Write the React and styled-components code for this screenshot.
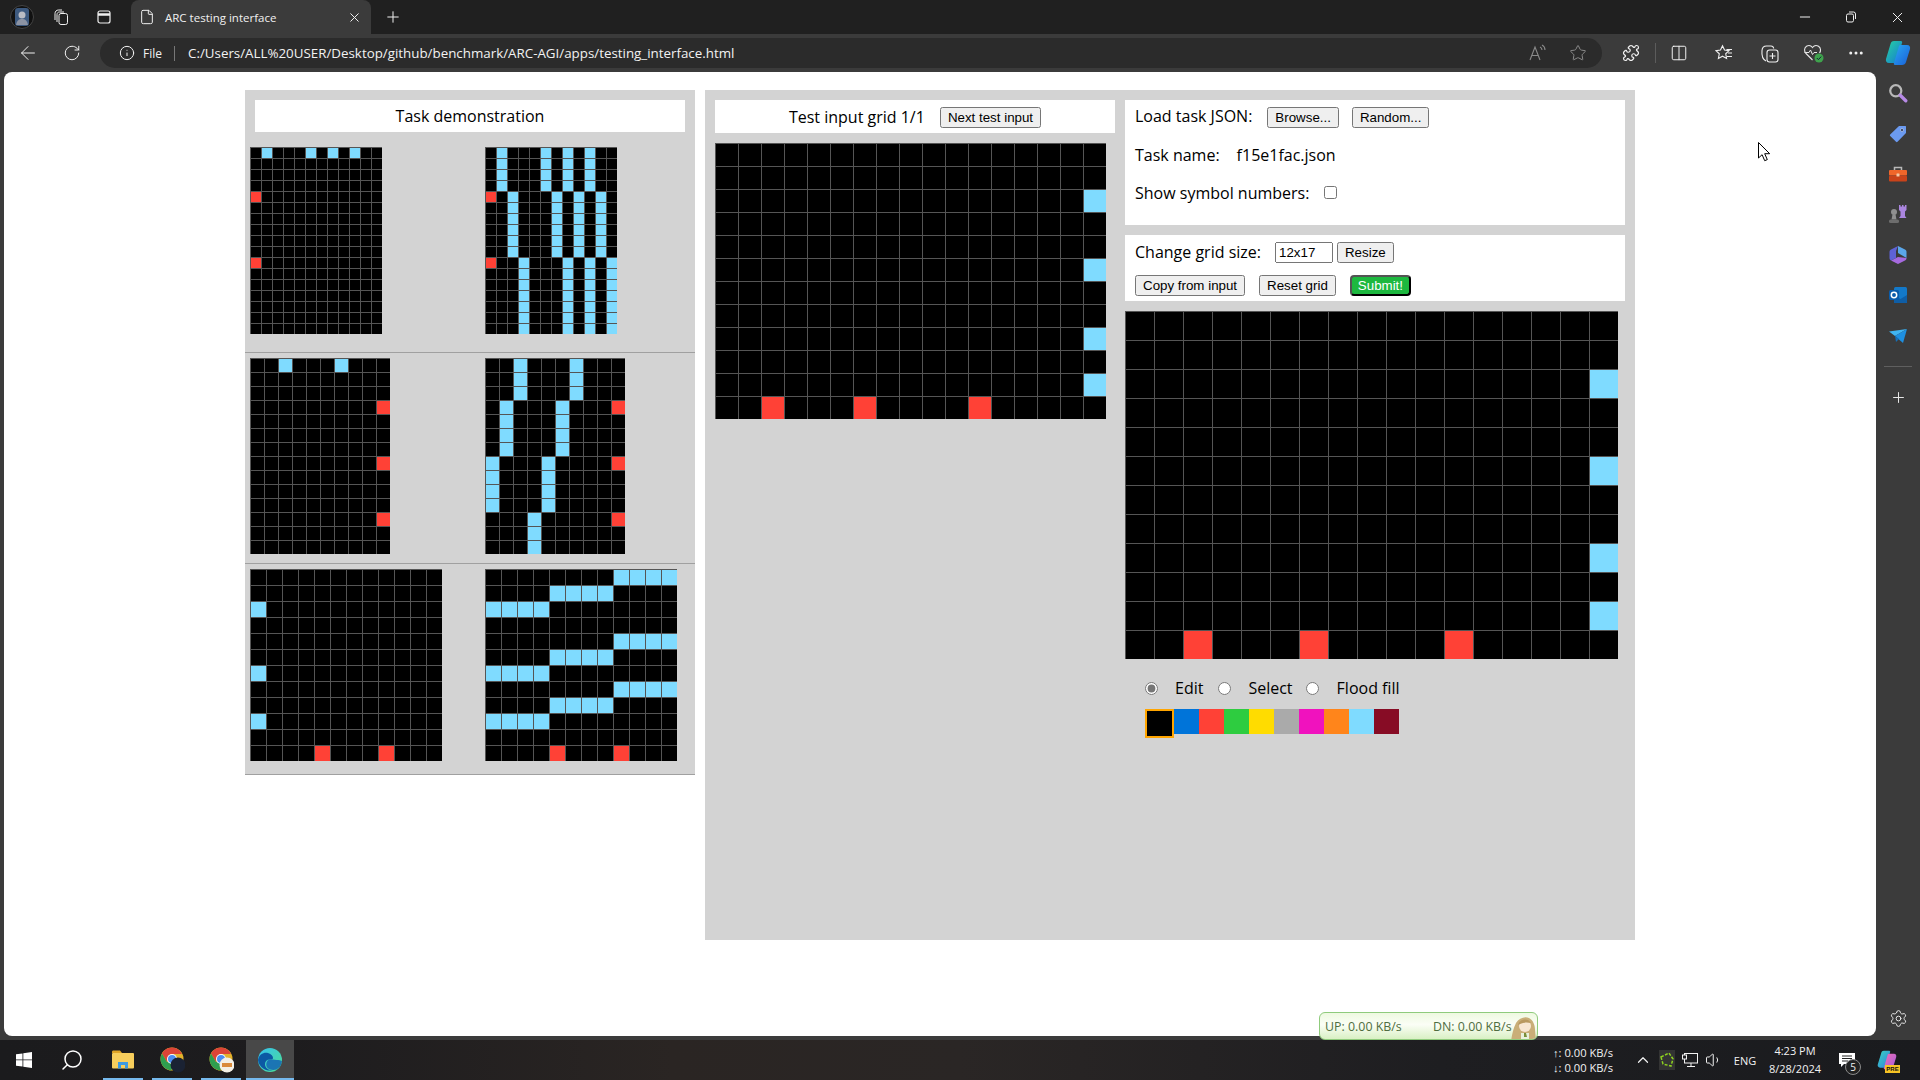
import React from 'react';
import styled, { createGlobalStyle } from 'styled-components';
import {
  ArrowLeft, RotateCw, Info, Star, Puzzle, Columns2, Plus, X, Minus, File, MoreHorizontal,
  Settings, ChevronUp, Volume1, Search,
} from 'lucide-react';

const BLUE = '#7FDBFF';
const RED = '#FF4136';
const PALETTE = ['#000000', '#0074D9', RED, '#2ECC40', '#FFDC00', '#AAAAAA', '#F012BE', '#FF851B', BLUE, '#870C25'];

const GlobalStyle = createGlobalStyle`
  html, body { margin: 0; padding: 0; background: #202020; overflow: hidden; }
  * { box-sizing: border-box; }
`;

const Screen = styled.div`
  position: relative;
  width: 1920px;
  height: 1080px;
  display: flex;
  flex-direction: column;
  overflow: hidden;
  font-family: "Open Sans", sans-serif;
  color: #000;
`;

/* browser chrome */
const TitleBar = styled.div`
  height: 34px;
  background: #202020;
  display: flex;
  align-items: stretch;
  color: #f0f0f0;
`;

const Slot = styled.div`
  width: ${p => p.$w}px;
  flex: none;
  display: flex;
  align-items: center;
  justify-content: center;
  color: ${p => p.$color || 'inherit'};
`;

const Tab = styled.div`
  width: 240px;
  margin-left: 1px;
  background: #3b3b3b;
  border-radius: 8px 8px 0 0;
  display: flex;
  align-items: center;
  padding: 0 9px 0 8px;
  font-size: 11.5px;
  color: #f0f0f0;
`;

const TabTitle = styled.span`
  margin-left: 10px;
  flex: 1;
`;

const PlusSlot = styled(Slot)`
  margin-left: 1px;
`;

const Spacer = styled.div`
  flex: 1;
`;

const Toolbar = styled.div`
  height: 38px;
  background: #3b3b3b;
  display: flex;
  align-items: center;
  color: #f0f0f0;
`;

const AddressPill = styled.div`
  width: 1502px;
  height: 30px;
  margin-left: 12px;
  margin-right: 8px;
  border-radius: 15px;
  background: #2b2b2b;
  display: flex;
  align-items: center;
  padding-left: 19px;
  font-size: 12px;
  color: #f2f2f2;
`;

const FileLabel = styled.span`
  margin-left: 8px;
`;

const PillDivider = styled.div`
  width: 1px;
  height: 15px;
  background: #777;
  margin: 0 13px 0 12px;
`;

const Url = styled.span`
  flex: 1;
  font-size: 13.35px;
  white-space: nowrap;
`;

const ToolGroup = styled.div`
  display: flex;
  align-items: center;
  gap: 3px;
`;

const ToolDivider = styled.div`
  width: 1px;
  height: 20px;
  background: #5c5c5c;
  margin: 0 -1px 0 0;
`;

const Main = styled.div`
  flex: 1;
  display: flex;
  background: #3b3b3b;
  padding-left: 4px;
`;

const Page = styled.div`
  width: 1872px;
  height: 964px;
  background: #fff;
  border-radius: 8px;
  padding: 18px 0 0 241px;
  display: flex;
  align-items: flex-start;
  gap: 10px;
`;

const SideBar = styled.div`
  width: 44px;
  height: 964px;
  display: flex;
  flex-direction: column;
  align-items: center;
  padding-top: 1px;
  color: #e6e6e6;
`;

const SideSlot = styled.div`
  height: 40.4px;
  width: 44px;
  display: flex;
  align-items: center;
  justify-content: center;
`;

const SideRule = styled.div`
  width: 28px;
  height: 1px;
  background: #5f5f5f;
  margin: 10px 0 11px;
`;

const SideBottom = styled.div`
  margin-top: auto;
  height: 36px;
  display: flex;
  align-items: center;
`;

/* the ARC page */
const DemoPanel = styled.div`
  width: 450px;
  height: 685px;
  background: #d3d3d3;
  padding-top: 10px;
`;

const DemoTitle = styled.div`
  height: 32px;
  margin: 0 10px;
  background: #fff;
  font-size: 16px;
  display: flex;
  align-items: center;
  justify-content: center;
`;

const PairList = styled.div`
  margin-top: 10px;
`;

const Pair = styled.div`
  height: 211px;
  border-bottom: 1px solid #a0a0a0;
  padding: 5px 0 0 5px;
  display: grid;
  grid-template-columns: 235px 1fr;
  align-items: start;
`;

const GridBox = styled.div`
  display: grid;
  grid-template-columns: repeat(${p => p.$cols}, ${p => p.$cell}px);
  grid-auto-rows: ${p => p.$cell}px;
  width: max-content;
`;

const Cell = styled.div`
  border-top: 1px solid #555;
  border-left: 1px solid #555;
  background: ${p => p.$fill};
`;

const WorkPanel = styled.div`
  width: 930px;
  height: 850px;
  background: #d3d3d3;
  padding: 10px;
  display: flex;
  gap: 10px;
  align-items: flex-start;
`;

const InputColumn = styled.div`
  width: 400px;
`;

const InputTitle = styled.div`
  height: 33px;
  background: #fff;
  font-size: 16px;
  display: flex;
  align-items: center;
  justify-content: center;
  gap: 15px;
  margin-bottom: 10px;
`;

const OutputColumn = styled.div`
  width: 500px;
`;

const WhiteBox = styled.div`
  background: #fff;
  height: ${p => p.$h}px;
  padding: ${p => p.$pad}px 0 0 10px;
  margin-bottom: 10px;
  font-size: 16px;
`;

const InfoRow = styled.div`
  height: 33px;
  margin-bottom: 5px;
  display: flex;
  align-items: center;
  gap: ${p => p.$gap}px;
`;

const ControlRow = styled.div`
  height: 21px;
  margin-bottom: 12px;
  display: flex;
  align-items: center;
  gap: ${p => p.$gap}px;
`;

const Label = styled.span`
  margin-right: ${p => p.$mr}px;
  margin-bottom: 2px;
`;

const Button = styled.button`
  font-family: "Liberation Sans", Arial, sans-serif;
  font-size: 13.333px;
  height: 21px;
`;

const HeaderButton = styled(Button)`
  margin-top: 2px;
`;

const SubmitButton = styled(Button)`
  background: #1db83f;
  color: #fff;
  border: 2px outset #000;
  border-radius: 4px;
  padding: 1px 6px;
`;

const SizeInput = styled.input`
  width: 58px;
  height: 21px;
  font-family: "Liberation Sans", Arial, sans-serif;
  font-size: 13.333px;
  margin-right: -10px;
`;

const Check = styled.input`
  width: 13px;
  height: 13px;
  margin: 0;
`;

const ModeRow = styled.div`
  margin: 17px 0 9px 20px;
  height: 24px;
  display: flex;
  align-items: center;
  font-size: 16px;
`;

const Mode = styled.label`
  display: flex;
  align-items: center;
  gap: ${p => p.$gap}px;
  margin-right: ${p => p.$mr}px;
`;

const Radio = styled.input`
  width: 13px;
  height: 13px;
  margin: 0;
  accent-color: #767676;
`;

const Swatches = styled.div`
  margin-left: 20px;
  display: flex;
  align-items: flex-start;
`;

const Swatch = styled.div`
  width: ${p => (p.$selected ? 29 : 25)}px;
  height: ${p => (p.$selected ? 29 : 25)}px;
  background: ${p => p.$fill};
  border: ${p => (p.$selected ? '2px solid orange' : 'none')};
`;

/* windows bits */
const Taskbar = styled.div`
  height: 40px;
  background: linear-gradient(90deg, #1b1b1d 0%, #1d1c1e 15%, #2a2523 35%, #2a2625 50%, #1e1e21 75%, #1a1b1e 100%);
  display: flex;
  align-items: stretch;
  color: #fff;
`;

const TaskApps = styled.div`
  display: flex;
  margin-left: 3px;
  gap: 1px;
`;

const TaskItem = styled.div`
  position: relative;
  width: 48px;
  display: flex;
  align-items: center;
  justify-content: center;
  background: ${p => (p.$active ? '#484848' : 'transparent')};
  &::after {
    content: '';
    position: absolute;
    bottom: 0;
    height: 2px;
    left: ${p => (p.$active ? 0 : 4)}px;
    right: ${p => (p.$active ? 0 : 4)}px;
    background: #76b9ed;
  }
`;

const TaskSearch = styled(Search)`
  transform: scaleX(-1);
`;

const Tray = styled.div`
  margin-left: auto;
  margin-right: 14px;
  display: flex;
  align-items: stretch;
  font-size: 11px;
  color: #f2f2f2;
`;

const Speed = styled.div`
  width: 78px;
  display: flex;
  flex-direction: column;
  justify-content: center;
  gap: 1px;
  font-size: 11.2px;
  line-height: 14px;
  white-space: nowrap;
`;

const Clock = styled.div`
  width: 62px;
  display: flex;
  flex-direction: column;
  align-items: center;
  justify-content: center;
  line-height: 18px;
  font-size: 11px;
  white-space: nowrap;
`;

const NetWidget = styled.div`
  position: absolute;
  left: 1319px;
  top: 1012px;
  width: 219px;
  height: 28px;
  border: 1px solid #8fcb7c;
  border-radius: 6px;
  background: linear-gradient(180deg, #eef9e0 0%, #fbfef6 45%, #d9f0c4 100%);
  display: flex;
  align-items: center;
  padding-left: 5px;
  font-size: 12.4px;
  color: #4f6d40;
  overflow: hidden;
`;

const NetValue = styled.span`
  width: ${p => p.$w}px;
  flex: none;
  white-space: nowrap;
`;

const Mascot = styled.svg`
  position: absolute;
  right: 0;
  top: 0;
`;

const Cursor = styled.svg`
  position: absolute;
  left: 1758px;
  top: 142px;
`;

const NotifyBadge = styled.span`
  position: absolute;
  right: -6px;
  bottom: -7px;
  width: 16px;
  height: 16px;
  border-radius: 50%;
  border: 1px solid #8a8a8a;
  background: #222;
  font-size: 10px;
  line-height: 14px;
  text-align: center;
`;

const NotifyWrap = styled.div`
  position: relative;
  display: flex;
`;

const PreWrap = styled.div`
  position: relative;
  display: flex;
`;

const PreBadge = styled.span`
  position: absolute;
  right: -3px;
  bottom: -3px;
  width: 15px;
  height: 8px;
  background: #f7c325;
  color: #111;
  font-family: "Liberation Sans", Arial, sans-serif;
  font-weight: 700;
  font-size: 6px;
  line-height: 8px;
  text-align: center;
`;

function makeGrid(rows, cols, blues, reds) {
  const grid = Array.from({ length: rows }, () => Array(cols).fill('#000000'));
  blues.forEach(([from, to, columns]) => {
    for (let r = from; r <= to; r++) columns.forEach(c => { grid[r][c] = BLUE; });
  });
  reds.forEach(([r, c]) => { grid[r][c] = RED; });
  return grid;
}

const Grid = ({ data, cell }) => (
  <GridBox $cols={data[0].length} $cell={cell}>
    {data.flat().map((fill, i) => <Cell key={i} $fill={fill} />)}
  </GridBox>
);

const PAIRS = [
  {
    cell: 11,
    input: makeGrid(17, 12, [[0, 0, [1, 5, 7, 9]]], [[4, 0], [10, 0]]),
    output: makeGrid(17, 12, [[0, 3, [1, 5, 7, 9]], [4, 9, [2, 6, 8, 10]], [10, 16, [3, 7, 9, 11]]], [[4, 0], [10, 0]]),
  },
  {
    cell: 14,
    input: makeGrid(14, 10, [[0, 0, [2, 6]]], [[3, 9], [7, 9], [11, 9]]),
    output: makeGrid(14, 10, [[0, 2, [2, 6]], [3, 6, [1, 5]], [7, 10, [0, 4]], [11, 13, [3]]], [[3, 9], [7, 9], [11, 9]]),
  },
  {
    cell: 16,
    input: makeGrid(12, 12, [[2, 2, [0]], [6, 6, [0]], [9, 9, [0]]], [[11, 4], [11, 8]]),
    output: makeGrid(12, 12, [
      [0, 0, [8, 9, 10, 11]], [1, 1, [4, 5, 6, 7]], [2, 2, [0, 1, 2, 3]],
      [4, 4, [8, 9, 10, 11]], [5, 5, [4, 5, 6, 7]], [6, 6, [0, 1, 2, 3]],
      [7, 7, [8, 9, 10, 11]], [8, 8, [4, 5, 6, 7]], [9, 9, [0, 1, 2, 3]],
    ], [[11, 4], [11, 8]]),
  },
];

const TEST_GRID = makeGrid(12, 17, [[2, 2, [16]], [5, 5, [16]], [8, 8, [16]], [10, 10, [16]]], [[11, 2], [11, 6], [11, 11]]);

const Avatar = () => (
  <svg width="24" height="24" viewBox="0 0 24 24">
    <circle cx="12" cy="12" r="11.5" fill="#111" stroke="#444" />
    <rect x="5" y="3" width="14" height="18" rx="3" fill="#3d5a80" />
    <circle cx="12" cy="10" r="3.5" fill="#b9bcc4" />
    <path d="M6 20c1-5 3-6 6-6s5 1 6 6z" fill="#8c93a3" />
  </svg>
);

const Workspaces = () => (
  <svg width="18" height="18" viewBox="0 0 18 18" fill="none" stroke="currentColor" strokeWidth="1">
    <rect x="7" y="5.5" width="8.5" height="11" rx="2" />
    <path d="M5 14V6.5c0-1.5 1-2.5 2.5-2.5H12M3 12V5.500C3 3.500 4.500 2 6.500 2H10" />
  </svg>
);

const TabStrip = () => (
  <svg width="16" height="16" viewBox="0 0 16 16" fill="none" stroke="currentColor" strokeWidth="1.2">
    <rect x="2" y="2" width="12" height="12" rx="2" />
    <path d="M2 5.500h12" strokeWidth="2.500" />
  </svg>
);

const Restore = () => (
  <svg width="12" height="12" viewBox="0 0 12 12" fill="none" stroke="currentColor" strokeWidth="1">
    <rect x="1.500" y="3" width="7" height="8" rx="1.500" />
    <path d="M4 1h4.500A2 2 0 0 1 10.500 3v5" />
  </svg>
);

const ReadAloud = () => (
  <svg width="20" height="18" viewBox="0 0 20 18" fill="none" stroke="#8a8a8a" strokeWidth="1.100">
    <path d="M2 16L7 3l5 13M4 11.500h6" />
    <path d="M12 3c1.500.7 2 1.700 2 3M14 1c2.200 1 3 2.800 3 5" />
  </svg>
);

const FavoritesList = () => (
  <svg width="18" height="18" viewBox="0 0 18 18" fill="none" stroke="currentColor" strokeWidth="1.100">
    <path d="M7.500 1.800l2 4.300 4.500.5-3.300 3.200.9 4.700-4.100-2.300-4.100 2.300.9-4.700L1 6.600l4.500-.5z" />
    <path d="M11.500 5.500H17M13 9h4M12 12.500h5" />
  </svg>
);

const Collections = () => (
  <svg width="19" height="19" viewBox="0 0 19 19" fill="none" stroke="currentColor" strokeWidth="1.100">
    <path d="M6 17C3 15.500 1.500 12 2 6.500 2.200 3.500 4 2 6.500 2H11c1.500 0 2.500 1 2.700 2.500" />
    <rect x="7" y="6" width="11" height="12" rx="2.500" />
    <path d="M12.500 9v6M9.500 12h6" />
  </svg>
);

const HeartCheck = () => (
  <svg width="22" height="22" viewBox="0 0 22 22" fill="none">
    <path d="M9.500 18L3 11.500C1 9.500 1 6 3.500 4.300 5.700 3 8 3.600 9.500 5.500 11 3.600 13.500 3 15.500 4.300 18 6 18 9 16.500 11" stroke="#e6e6e6" strokeWidth="1.100" />
    <path d="M1.500 10.500h4.500l1.500-2.500 2 4.500 1.500-2h3" stroke="#e6e6e6" strokeWidth="1" />
    <circle cx="16" cy="16" r="4.500" fill="#3fa34d" />
    <path d="M13.800 16l1.600 1.600 2.800-3" stroke="#123" strokeWidth="1" />
  </svg>
);

const CopilotLogo = () => (
  <svg width="26" height="26" viewBox="0 0 26 26">
    <defs>
      <linearGradient id="copA" x1="0" y1="0" x2="1" y2="1">
        <stop offset="0" stopColor="#27d3a0" />
        <stop offset="1" stopColor="#1478d4" />
      </linearGradient>
      <linearGradient id="copB" x1="0" y1="0" x2="1" y2="1">
        <stop offset="0" stopColor="#2aa8f2" />
        <stop offset="1" stopColor="#1a5fd8" />
      </linearGradient>
    </defs>
    <path d="M9 1h7c1 0 1.500 1 1 2L12 21c-.5 1.500-1.500 2-3 2H4c-2.500 0-3.500-2-3-4L5.500 4C6 2 7 1 9 1z" fill="url(#copA)" />
    <path d="M16 5h6c2.500 0 3.500 2 3 4l-4 13c-.5 2-2 3-4 3h-7c-1 0-1.500-1-1-2l5-17c.3-.7 1-1 2-1z" fill="url(#copB)" />
  </svg>
);

const CopilotPre = () => (
  <PreWrap>
    <svg width="20" height="20" viewBox="0 0 26 26">
      <defs>
        <linearGradient id="preA" x1="0" y1="0" x2="1" y2="1">
          <stop offset="0" stopColor="#3ad6c0" />
          <stop offset="1" stopColor="#2f7fe0" />
        </linearGradient>
        <linearGradient id="preB" x1="0" y1="0" x2="1" y2="1">
          <stop offset="0" stopColor="#f26fb0" />
          <stop offset="1" stopColor="#a05be0" />
        </linearGradient>
      </defs>
      <path d="M9 1h7c1 0 1.500 1 1 2L12 21c-.5 1.500-1.500 2-3 2H4c-2.500 0-3.500-2-3-4L5.500 4C6 2 7 1 9 1z" fill="url(#preA)" />
      <path d="M16 5h6c2.500 0 3.500 2 3 4l-4 13c-.5 2-2 3-4 3h-7c-1 0-1.500-1-1-2l5-17c.3-.7 1-1 2-1z" fill="url(#preB)" />
    </svg>
    <PreBadge>PRE</PreBadge>
  </PreWrap>
);

const MagnifierTag = () => (
  <svg width="20" height="20" viewBox="0 0 18 18" fill="none">
    <circle cx="7" cy="7" r="5" stroke="#b8b8b8" strokeWidth="2" />
    <path d="M11 11l5 5" stroke="#b78ae6" strokeWidth="3" strokeLinecap="round" />
  </svg>
);

const PriceTag = () => (
  <svg width="18" height="18" viewBox="0 0 18 18">
    <path d="M10 1h6.500c.3 0 .5.200.5.500V8L8.500 16.800c-.5.500-1 .500-1.500 0L1.200 11c-.5-.5-.5-1 0-1.500z" fill="#6b9af0" />
    <circle cx="13" cy="5" r="1.500" fill="#1f2f55" stroke="#d8e4ff" strokeWidth=".6" />
  </svg>
);

const Toolbox = () => (
  <svg width="20" height="18" viewBox="0 0 20 18">
    <path d="M6.500 5V2.500h7V5" fill="none" stroke="#b9b9b9" strokeWidth="1.500" />
    <rect x="1" y="5" width="18" height="5.500" rx="1" fill="#f0662a" />
    <rect x="1" y="10.500" width="18" height="6" rx="1" fill="#c9431a" />
    <rect x="8.500" y="8.500" width="3" height="3" rx=".5" fill="#f3c9a8" />
  </svg>
);

const ChessPieces = () => (
  <svg width="20" height="20" viewBox="0 0 20 20">
    <path d="M11 1h1.500v1.500H14V1h1.500v1.500H17V1h1.500v5l-1.500 1.500V12l1.500 2H11l1.500-2V7.500L11 6z" fill="#ab86e0" />
    <circle cx="6" cy="8" r="3" fill="#8f8f8f" />
    <path d="M4.500 10.500h3l1 5h-5z" fill="#8f8f8f" />
    <rect x="1" y="15.500" width="10" height="3.500" rx="1.500" fill="#6d6d6d" />
  </svg>
);

const CopilotPlay = () => (
  <svg width="18" height="20" viewBox="0 0 18 20">
    <path d="M9 1l7 3.500c1 .5 1.500 1.500 1.500 2.500v6L9 8z" fill="#5aa7ea" />
    <path d="M17.500 13c0 1-.5 2-1.500 2.500L9 19 2 15.500 9 12z" fill="#a66adf" />
    <path d="M9 1L2 4.500C1 5 .5 6 .5 7v6c0 1 .500 2 1.500 2.500L7 13V6z" fill="#5e62d6" />
  </svg>
);

const Outlook = () => (
  <svg width="18" height="18" viewBox="0 0 18 18">
    <rect x="5" y="1" width="13" height="16" rx="1.500" fill="#1379c9" />
    <path d="M5 9l6.500 4L18 9v8H5z" fill="#0f5ea6" />
    <rect x="0" y="4" width="10" height="10" rx="1.500" fill="#0a5cab" />
    <circle cx="5" cy="9" r="2.700" fill="none" stroke="#fff" strokeWidth="1.500" />
  </svg>
);

const SendPlane = () => (
  <svg width="18" height="16" viewBox="0 0 18 16">
    <path d="M0 3.500L18 1 6 8z" fill="#40b5f2" />
    <path d="M18 1L6 8l8 7z" fill="#1e8fe0" />
    <path d="M6 8l1 6 3-3z" fill="#146fb8" />
  </svg>
);

const WindowsLogo = () => (
  <svg width="16" height="16" viewBox="0 0 16 16" fill="#fff">
    <path d="M0 2.300L6.500 1.400V7.500H0zM7.300 1.300L16 0V7.500H7.300zM0 8.300H6.500V14.600L0 13.700zM7.300 8.300H16V16L7.300 14.700z" />
  </svg>
);

const FolderIcon = () => (
  <svg width="22" height="20" viewBox="0 0 22 20">
    <path d="M0 2c0-1 .500-1.500 1.500-1.500H8L10 3H0z" fill="#e0a526" />
    <rect x="0" y="3" width="22" height="15.500" rx="1" fill="#f7ce5c" />
    <path d="M6 18.500V12h10v6.500h-3v-3.500H9v3.500z" fill="#3d9ae0" />
  </svg>
);

const ChromeIcon = ({ children }) => (
  <svg width="26" height="26" viewBox="-1 0 26 26">
    <circle cx="12" cy="12" r="11.500" fill="#e2b22b" />
    <path d="M12 .500A11.500 11.500 0 0 0 2 6.500L7 15l5-8h10A11.500 11.500 0 0 0 12 .500z" fill="#dc4437" />
    <path d="M2 6.500A11.500 11.500 0 0 0 11 23.500L16 15H7z" fill="#2f9e4f" />
    <circle cx="12" cy="12" r="5" fill="#fff" />
    <circle cx="12" cy="12" r="4" fill="#4b8df0" />
    {children}
  </svg>
);

const EdgeIcon = () => (
  <svg width="26" height="26" viewBox="0 0 26 26">
    <defs>
      <linearGradient id="edgeA" x1="0" y1="0" x2="1" y2="1">
        <stop offset="0" stopColor="#35c1f1" />
        <stop offset="1" stopColor="#4ddf8f" />
      </linearGradient>
    </defs>
    <circle cx="13" cy="13" r="12" fill="url(#edgeA)" />
    <path d="M1 13C2 7 7 5 11 6c3.500 1 5 3 5 5 0 1-1 1.500-3 1.500-4 0-6 3-4.500 7 1 2.500 4 4 7.500 3.700A12 12 0 0 1 1 13z" fill="#0c59a4" />
    <path d="M13 12.500c3.500 0 10 .5 12 1.500-.4 4-2.500 7-5.500 8.500-3 1-7 .5-9-1.500-2.500-3-1-8.500 2.500-8.500z" fill="#1464b4" opacity=".85" />
  </svg>
);

const Network = () => (
  <svg width="16" height="16" viewBox="0 0 16 16" fill="none" stroke="#f2f2f2" strokeWidth="1">
    <rect x="2.500" y="1.500" width="13" height="9.500" />
    <path d="M9 11v3M5 14.500h8" />
    <rect x=".5" y="3" width="4" height="4" fill="#1f1f22" />
  </svg>
);

const GreenTray = () => (
  <svg width="16" height="20" viewBox="0 0 16 20">
    <rect x="0" y="0" width="16" height="20" fill="#333" />
    <path d="M2 7L10 3l4 6-2 7-8-2z" fill="none" stroke="#8ed11f" strokeWidth="1.500" strokeDasharray="3 1.500" />
  </svg>
);

const Notification = () => (
  <NotifyWrap>
    <svg width="16" height="15" viewBox="0 0 16 15">
      <path d="M0 0h16v11H5l-3 3v-3H0z" fill="#fff" />
      <path d="M3 3h10M3 5.500h10M3 8h6" stroke="#222" strokeWidth="1" />
    </svg>
    <NotifyBadge>5</NotifyBadge>
  </NotifyWrap>
);

const App = () => (
  <Screen>
    <GlobalStyle />
    <TitleBar>
      <Slot $w={44}><Avatar /></Slot>
      <Slot $w={34}><Workspaces /></Slot>
      <Slot $w={52}><TabStrip /></Slot>
      <Tab>
        <File size={16} strokeWidth={1} absoluteStrokeWidth />
        <TabTitle>ARC testing interface</TabTitle>
        <X size={15} strokeWidth={1} absoluteStrokeWidth />
      </Tab>
      <PlusSlot $w={42}><Plus size={18} strokeWidth={1} absoluteStrokeWidth /></PlusSlot>
      <Spacer />
      <Slot $w={46}><Minus size={16} strokeWidth={1} absoluteStrokeWidth /></Slot>
      <Slot $w={46}><Restore /></Slot>
      <Slot $w={46}><X size={17} strokeWidth={1} absoluteStrokeWidth /></Slot>
    </TitleBar>

    <Toolbar>
      <Slot $w={56}><ArrowLeft size={22} strokeWidth={1} absoluteStrokeWidth /></Slot>
      <Slot $w={32}><RotateCw size={18} strokeWidth={1} absoluteStrokeWidth /></Slot>
      <AddressPill>
        <Info size={16} strokeWidth={1} absoluteStrokeWidth />
        <FileLabel>File</FileLabel>
        <PillDivider />
        <Url>C:/Users/ALL%20USER/Desktop/github/benchmark/ARC-AGI/apps/testing_interface.html</Url>
        <Slot $w={40}><ReadAloud /></Slot>
        <Slot $w={40} $color="#8a8a8a"><Star size={18} strokeWidth={1} absoluteStrokeWidth /></Slot>
        <Slot $w={4} />
      </AddressPill>
      <ToolGroup>
        <Slot $w={42}><Puzzle size={18} strokeWidth={1.2} absoluteStrokeWidth /></Slot>
        <ToolDivider />
        <Slot $w={42}><Columns2 size={18} strokeWidth={1} absoluteStrokeWidth /></Slot>
        <Slot $w={42}><FavoritesList /></Slot>
        <Slot $w={42}><Collections /></Slot>
        <Slot $w={42}><HeartCheck /></Slot>
        <Slot $w={36}><MoreHorizontal size={18} strokeWidth={1.5} absoluteStrokeWidth /></Slot>
        <Slot $w={42}><CopilotLogo /></Slot>
      </ToolGroup>
    </Toolbar>

    <Main>
      <Page>
        <DemoPanel>
          <DemoTitle>Task demonstration</DemoTitle>
          <PairList>
            {PAIRS.map((pair, i) => (
              <Pair key={i}>
                <Grid data={pair.input} cell={pair.cell} />
                <Grid data={pair.output} cell={pair.cell} />
              </Pair>
            ))}
          </PairList>
        </DemoPanel>

        <WorkPanel>
          <InputColumn>
            <InputTitle>
              <span>Test input grid 1/1</span>
              <HeaderButton>Next test input</HeaderButton>
            </InputTitle>
            <Grid data={TEST_GRID} cell={23} />
          </InputColumn>

          <OutputColumn>
            <WhiteBox $h={125} $pad={0}>
              <InfoRow $gap={13}>
                <Label $mr={2}>Load task JSON:</Label>
                <HeaderButton>Browse...</HeaderButton>
                <HeaderButton>Random...</HeaderButton>
              </InfoRow>
              <InfoRow $gap={17}>
                <span>Task name:</span>
                <span>f15e1fac.json</span>
              </InfoRow>
              <InfoRow $gap={15}>
                <span>Show symbol numbers:</span>
                <Check type="checkbox" />
              </InfoRow>
            </WhiteBox>
            <WhiteBox $h={66} $pad={7}>
              <ControlRow $gap={14}>
                <Label $mr={0}>Change grid size:</Label>
                <SizeInput defaultValue="12x17" />
                <Button>Resize</Button>
              </ControlRow>
              <ControlRow $gap={14}>
                <Button>Copy from input</Button>
                <Button>Reset grid</Button>
                <SubmitButton>Submit!</SubmitButton>
              </ControlRow>
            </WhiteBox>
            <Grid data={TEST_GRID} cell={29} />
            <ModeRow>
              <Mode $gap={17} $mr={15}><Radio type="radio" name="mode" defaultChecked />Edit</Mode>
              <Mode $gap={17} $mr={13}><Radio type="radio" name="mode" />Select</Mode>
              <Mode $gap={18} $mr={0}><Radio type="radio" name="mode" />Flood fill</Mode>
            </ModeRow>
            <Swatches>
              {PALETTE.map((fill, i) => <Swatch key={fill} $fill={fill} $selected={i === 0} />)}
            </Swatches>
          </OutputColumn>
        </WorkPanel>
      </Page>

      <SideBar>
        <SideSlot><MagnifierTag /></SideSlot>
        <SideSlot><PriceTag /></SideSlot>
        <SideSlot><Toolbox /></SideSlot>
        <SideSlot><ChessPieces /></SideSlot>
        <SideSlot><CopilotPlay /></SideSlot>
        <SideSlot><Outlook /></SideSlot>
        <SideSlot><SendPlane /></SideSlot>
        <SideRule />
        <SideSlot><Plus size={17} strokeWidth={1} absoluteStrokeWidth /></SideSlot>
        <SideBottom><Settings size={19} strokeWidth={1} absoluteStrokeWidth /></SideBottom>
      </SideBar>
    </Main>

    <Taskbar>
      <Slot $w={48}><WindowsLogo /></Slot>
      <Slot $w={48}><TaskSearch size={24} strokeWidth={1.5} absoluteStrokeWidth /></Slot>
      <TaskApps>
        <TaskItem><FolderIcon /></TaskItem>
        <TaskItem>
          <ChromeIcon><circle cx="18" cy="18" r="7.500" fill="#1a2233" /></ChromeIcon>
        </TaskItem>
        <TaskItem>
          <ChromeIcon>
            <circle cx="18" cy="18" r="7.500" fill="#f3efe6" />
            <rect x="13" y="16" width="10" height="4" fill="#d98a3c" />
          </ChromeIcon>
        </TaskItem>
        <TaskItem $active><EdgeIcon /></TaskItem>
      </TaskApps>
      <Tray>
        <Speed>
          <span>↑: 0.00 KB/s</span>
          <span>↓: 0.00 KB/s</span>
        </Speed>
        <Slot $w={24}><ChevronUp size={18} strokeWidth={1.2} absoluteStrokeWidth /></Slot>
        <Slot $w={23}><GreenTray /></Slot>
        <Slot $w={24}><Network /></Slot>
        <Slot $w={24}><Volume1 size={18} strokeWidth={1} absoluteStrokeWidth /></Slot>
        <Slot $w={38}>ENG</Slot>
        <Clock>
          <span>4:23 PM</span>
          <span>8/28/2024</span>
        </Clock>
        <Slot $w={42}><Notification /></Slot>
        <Slot $w={38}><CopilotPre /></Slot>
      </Tray>
    </Taskbar>

    <NetWidget>
      <NetValue $w={108}>UP: 0.00 KB/s</NetValue>
      <NetValue $w={90}>DN: 0.00 KB/s</NetValue>
      <Mascot width="30" height="28" viewBox="0 0 30 28">
        <path d="M4 28c1-6 2-12 5-18 3-5 9-7 13-5 4 2 6 7 6 12l1 11z" fill="#c9ae78" />
        <circle cx="18" cy="13" r="6" fill="#f8e6d2" />
        <path d="M11 12c1-6 10-8 13-2-4-1-8-1-13 2z" fill="#b9985f" />
        <path d="M14 20h8v8h-8z" fill="#e8f1dd" />
        <path d="M17 20h2l1 4h-3z" fill="#7a8f3a" />
      </Mascot>
    </NetWidget>

    <Cursor width="13" height="20" viewBox="0 0 13 20">
      <path d="M.5.500V16l3.600-3.300 2.600 6 2.600-1.100-2.600-5.900h5z" fill="#fff" stroke="#000" strokeWidth="1" />
    </Cursor>
  </Screen>
);

export default App;
